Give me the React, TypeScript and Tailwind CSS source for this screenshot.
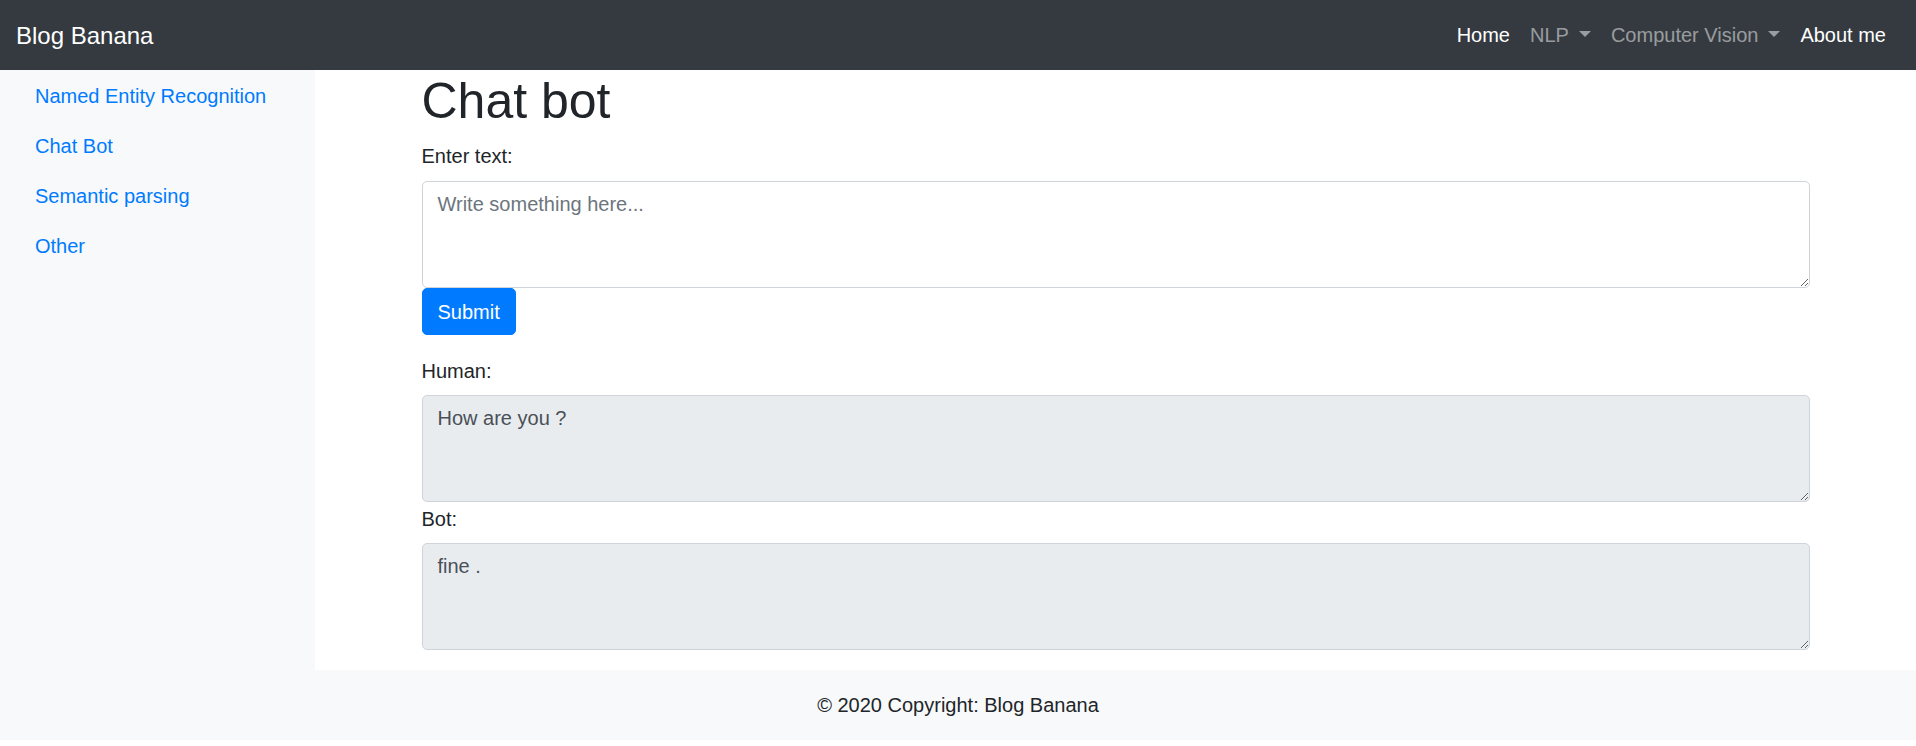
import React from 'react';

const font = { fontFamily: '"Liberation Sans", Arial, sans-serif' };

const sideLinks = ['Named Entity Recognition', 'Chat Bot', 'Semantic parsing', 'Other'];

const Caret: React.FC = () => (
  <span className="inline-block w-0 h-0 ml-[10px] align-[5px] border-t-[6px] border-t-current border-x-[6px] border-x-transparent" />
);

const App: React.FC = () => {
  return (
    <div className="bg-white text-[#212529] text-[20px] leading-[30px]" style={font}>
      <nav className="h-[70px] bg-[#343a40] flex items-center justify-between pl-[16px] pr-[20px]">
        <a href="#" className="text-white text-[24px] leading-[37px]">
          Blog Banana
        </a>
        <ul className="flex items-center">
          <li>
            <a href="#" className="block px-[10px] text-white">
              Home
            </a>
          </li>
          <li>
            <a href="#" className="block px-[10px] text-white/50">
              NLP
              <Caret />
            </a>
          </li>
          <li>
            <a href="#" className="block px-[10px] text-white/50">
              Computer Vision
              <Caret />
            </a>
          </li>
          <li>
            <a href="#" className="block px-[10px] text-white">
              About me
            </a>
          </li>
        </ul>
      </nav>

      <div className="flex">
        <aside className="w-[315px] shrink-0 bg-[#f8f9fa] pl-[15px]">
          <ul>
            {sideLinks.map((link) => (
              <li key={link}>
                <a href="#" className="block px-[20px] pt-[11px] pb-[9px] text-[#007bff]">
                  {link}
                </a>
              </li>
            ))}
          </ul>
        </aside>

        <main className="flex-1 pb-[20px]">
          <div className="w-[1388px] mx-auto">
            <h1 className="text-[50px] leading-[60px] font-medium pt-[1px] mb-[10px]">Chat bot</h1>
            <form onSubmit={(e) => e.preventDefault()}>
              <label htmlFor="input" className="block mb-[10px]">
                Enter text:
              </label>
              <textarea
                id="input"
                placeholder="Write something here..."
                className="block w-full h-[107px] px-[15px] py-[7px] border border-[#ced4da] rounded-[5px] text-[#495057] placeholder:text-[#6c757d] focus:outline-none"
              />
              <button
                type="submit"
                className="block h-[47px] px-[15px] border border-[#007bff] bg-[#007bff] text-white rounded-[5px]"
              >
                Submit
              </button>
            </form>

            <label className="block mt-[21px] mb-[9px]">Human:</label>
            <textarea
              readOnly
              defaultValue="How are you ?"
              className="block w-full h-[107px] px-[15px] py-[7px] border border-[#ced4da] rounded-[5px] bg-[#e9ecef] text-[#495057] focus:outline-none"
            />
            <label className="block mt-[2px] mb-[9px]">Bot:</label>
            <textarea
              readOnly
              defaultValue="fine ."
              className="block w-full h-[107px] px-[15px] py-[7px] border border-[#ced4da] rounded-[5px] bg-[#e9ecef] text-[#495057] focus:outline-none"
            />
          </div>
        </main>
      </div>

      <footer className="bg-[#f8f9fa] py-[20px] text-center">© 2020 Copyright: Blog Banana</footer>
    </div>
  );
};

export default App;
